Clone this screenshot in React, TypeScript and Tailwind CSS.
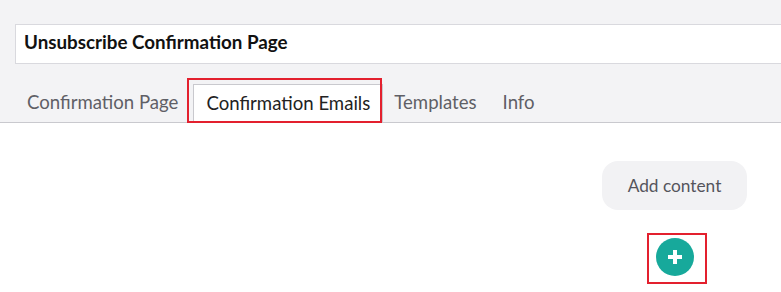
import React from "react";

export default function App() {
  return (
    <div className="w-[781px] h-[292px] overflow-hidden bg-white" style={{ fontFamily: "Lato, 'Noto Sans', sans-serif" }}>
      <div className="bg-[#f3f3f5] pl-[15px] pt-[24px] border-b border-[#c9c9ce]">
        <div className="h-[40px] -mr-4 bg-white border border-[#d9d9de] flex items-center pl-[8px] pb-[3px]">
          <span className="text-[18.8px] font-bold text-[#111]">Unsubscribe Confirmation Page</span>
        </div>
        <div className="flex items-end h-[58px] gap-[2px]">
          <div className="h-[39px] px-[12px] flex items-center text-[18.6px] text-[#5f5f66]">Confirmation Page</div>
          <div className="relative ml-[1px]">
            <div className="h-[39px] px-[12px] flex items-center text-[18.6px] text-[#222] bg-white border-t border-l border-r border-[#c9c9ce] -mb-px">Confirmation Emails</div>
            <div className="absolute left-[-6px] right-[1px] top-[-6px] bottom-[-1px] border-[2.5px] border-[#e3202e] pointer-events-none" />
          </div>
          <div className="h-[39px] px-[12px] ml-[-3px] flex items-center text-[18.6px] text-[#5f5f66]">Templates</div>
          <div className="h-[39px] px-[12px] flex items-center text-[18.6px] text-[#5f5f66]">Info</div>
        </div>
      </div>
      <div className="flex justify-end pr-[34px] pt-[38px]">
        <div className="flex flex-col items-center">
          <div className="w-[145px] h-[49px] rounded-[16px] bg-[#f2f2f4] flex items-center justify-center text-[17.3px] text-[#55555c]">Add content</div>
          <div className="relative mt-[28px]">
            <div className="w-[38px] h-[38px] rounded-full bg-[#17a99b] flex items-center justify-center">
              <svg width="14" height="14" viewBox="0 0 14 14">
                <rect x="5" y="0" width="4" height="14" fill="white" />
                <rect x="0" y="5" width="14" height="4" fill="white" />
              </svg>
            </div>
            <div className="absolute left-[-9px] top-[-5px] w-[60px] h-[51px] border-[2.5px] border-[#e3202e] pointer-events-none" />
          </div>
        </div>
      </div>
    </div>
  );
}
